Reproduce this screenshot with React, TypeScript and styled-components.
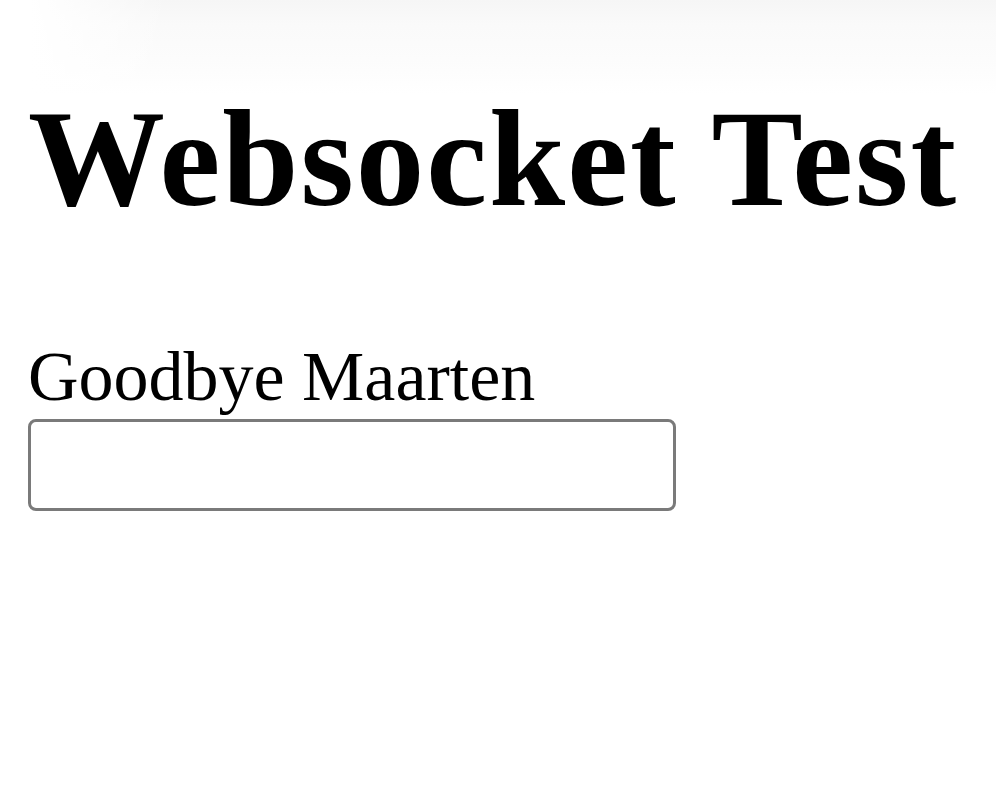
import styled, { createGlobalStyle } from 'styled-components';

const GlobalStyle = createGlobalStyle`
  html, body {
    margin: 0;
    padding: 0;
    background-color: #fff;
  }
  body {
    min-height: 796px;
    font-family: "Liberation Serif", "Times New Roman", serif;
    color: #000;
    background-image:
      linear-gradient(to right, #fff 30px, rgba(255, 255, 255, 0) 170px),
      linear-gradient(to bottom, #f6f6f6 0, #fafafa 25px, #fcfcfc 60px, #fff 95px);
    background-size: 100% 100px, 100% 100px;
    background-repeat: no-repeat;
  }
`;

// ── Page ────────────────────────────────────────────────────────────────────
const Page = styled.main`
  display: flex;
  flex-direction: column;
  align-items: flex-start;
  padding: 80px 0 0 28px;
`;

const Title = styled.h1`
  margin: 0 0 99px;
  font-size: 137px;
  font-weight: bold;
  letter-spacing: 2px;
  line-height: normal;
  white-space: nowrap;
`;

const Greeting = styled.div`
  font-size: 70px;
  line-height: normal;
  white-space: nowrap;
`;

const MessageInput = styled.input`
  box-sizing: border-box;
  width: 648px;
  height: 92px;
  margin-top: 2px;
  padding: 0 12px;
  border: 3px solid #7a7a7a;
  border-radius: 8px;
  background: #fff;
  font-family: inherit;
  font-size: 60px;
  outline: none;
`;

export default function App() {
  return (
    <>
      <GlobalStyle />
      <Page>
        <Title>Websocket Test</Title>
        <Greeting>Goodbye Maarten</Greeting>
        <MessageInput type="text" />
      </Page>
    </>
  );
}
